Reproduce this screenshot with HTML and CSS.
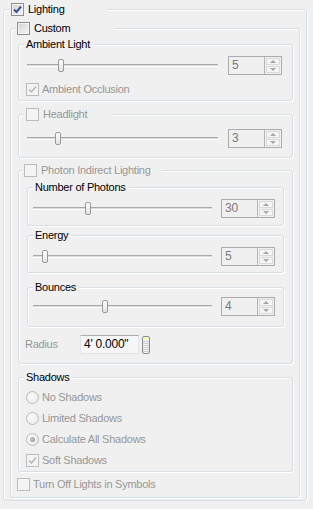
FILE: index.html
```html
<!DOCTYPE html>
<html lang="en">
<head>
    <meta charset="UTF-8">
    <meta name="viewport" content="width=device-width, initial-scale=1.0">
    <title>Lighting</title>
    <link rel="stylesheet" href="styles.css">
</head>
<body>
<div class="panel">
    <fieldset class="grp grp-lighting">
        <legend class="lg-check lg-lighting"><span class="cb"><svg viewBox="0 0 11 11"><path d="M2 5.5 L4.5 8 L9 2.5"/></svg></span>Lighting</legend>

        <fieldset class="grp grp-custom">
            <legend class="lg-check lg-custom"><span class="cb"></span>Custom</legend>

            <fieldset class="grp ambient">
                <legend class="lg-text">Ambient Light</legend>
                <div class="slider-row">
                    <div class="track"><span class="thumb" style="left:31px"></span></div>
                    <div class="spin"><span class="spin-val">5</span><span class="spin-btns"><span class="up"></span><span class="down"></span></span></div>
                </div>
                <div class="opt occl"><span class="cb dis"><svg viewBox="0 0 11 11"><path d="M2 5.5 L4.5 8 L9 2.5"/></svg></span>Ambient Occlusion</div>
            </fieldset>

            <fieldset class="grp headlight">
                <legend class="lg-check lg-head dis-text"><span class="cb dis"></span>Headlight</legend>
                <div class="slider-row">
                    <div class="track"><span class="thumb" style="left:28px"></span></div>
                    <div class="spin"><span class="spin-val">3</span><span class="spin-btns"><span class="up"></span><span class="down"></span></span></div>
                </div>
            </fieldset>

            <fieldset class="grp photon">
                <legend class="lg-check lg-photon dis-text"><span class="cb dis"></span>Photon Indirect Lighting</legend>

                <fieldset class="grp inner num">
                    <legend class="lg-text">Number of Photons</legend>
                    <div class="slider-row narrow">
                        <div class="track"><span class="thumb" style="left:52px"></span></div>
                        <div class="spin"><span class="spin-val">30</span><span class="spin-btns"><span class="up"></span><span class="down"></span></span></div>
                    </div>
                </fieldset>

                <fieldset class="grp inner energy">
                    <legend class="lg-text">Energy</legend>
                    <div class="slider-row narrow">
                        <div class="track"><span class="thumb" style="left:9px"></span></div>
                        <div class="spin"><span class="spin-val">5</span><span class="spin-btns"><span class="up"></span><span class="down"></span></span></div>
                    </div>
                </fieldset>

                <fieldset class="grp inner bounce">
                    <legend class="lg-text">Bounces</legend>
                    <div class="slider-row narrow">
                        <div class="track"><span class="thumb" style="left:69px"></span></div>
                        <div class="spin"><span class="spin-val">4</span><span class="spin-btns"><span class="up"></span><span class="down"></span></span></div>
                    </div>
                </fieldset>

                <div class="radius">
                    <span class="radius-label">Radius</span>
                    <span class="radius-input">4' 0.000"</span>
                    <svg class="calc" viewBox="0 0 8 18">
                        <rect x="0.5" y="0.5" width="7" height="17" rx="1.5" fill="#f4f4f4" stroke="#8c8c8c"/>
                        <rect x="1.5" y="1.5" width="5" height="2" fill="#f6f1a8"/>
                        <g fill="#a4a4a4">
                            <rect x="1.5" y="5" width="1" height="1"/><rect x="3.5" y="5" width="1" height="1"/><rect x="5.5" y="5" width="1" height="1"/>
                            <rect x="1.5" y="7" width="1" height="1"/><rect x="3.5" y="7" width="1" height="1"/><rect x="5.5" y="7" width="1" height="1"/>
                            <rect x="1.5" y="9" width="1" height="1"/><rect x="3.5" y="9" width="1" height="1"/><rect x="5.5" y="9" width="1" height="1"/>
                            <rect x="1.5" y="11" width="1" height="1"/><rect x="3.5" y="11" width="1" height="1"/><rect x="5.5" y="11" width="1" height="1"/>
                            <rect x="1.5" y="13" width="1" height="1"/><rect x="3.5" y="13" width="1" height="1"/><rect x="5.5" y="13" width="1" height="1"/>
                            <rect x="1.5" y="15" width="1" height="1"/><rect x="3.5" y="15" width="1" height="1"/><rect x="5.5" y="15" width="1" height="1"/>
                        </g>
                    </svg>
                </div>
            </fieldset>

            <fieldset class="grp shadows">
                <legend class="lg-text lg-shadows">Shadows</legend>
                <div class="opt"><span class="rb"></span>No Shadows</div>
                <div class="opt"><span class="rb"></span>Limited Shadows</div>
                <div class="opt"><span class="rb on"></span>Calculate All Shadows</div>
                <div class="opt soft"><span class="cb dis"><svg viewBox="0 0 11 11"><path d="M2 5.5 L4.5 8 L9 2.5"/></svg></span>Soft Shadows</div>
            </fieldset>

            <div class="opt turnoff"><span class="cb dis"></span>Turn Off Lights in Symbols</div>
        </fieldset>
    </fieldset>
</div>
</body>
</html>
```

FILE: styles.css
```css
*{
    box-sizing: border-box;
}
body{
    margin: 0;
    background: #f0f0f0;
    font: 11px/13px "Liberation Sans", Arial, sans-serif;
    letter-spacing: -0.25px;
    color: #000;
    overflow: hidden;
}
.panel{
    padding: 3px 6px 0 3px;
}

/* group boxes */
.grp{
    margin: 0;
    min-width: 0;
    border: 1px solid #d5dfe5;
    border-radius: 3px;
    box-shadow: 1px 1px 0 #fff, inset 1px 1px 0 #fff;
}
legend{
    margin: 0;
    padding: 0;
    height: 13px;
    line-height: 13px;
    background: #f0f0f0;
}
.lg-check{
    display: flex;
    align-items: center;
    padding-left: 1px;
}
.lg-text{
    padding: 0 3px 0 2px;
}
.dis-text{
    color: #979797;
}

.grp-lighting{
    padding: 6px 6px 2px 6px;
}
.lg-lighting{
    width: 98px;
}
.grp-custom{
    padding: 3px 6px 6px 7px;
}
.lg-custom{
    width: 99px;
    margin-left: -2px;
}
.ambient{
    padding: 5px 10px 4px 8px;
}
.ambient legend{
    margin-left: -3px;
}
.headlight{
    margin-top: 7px;
    padding: 8px 10px 9px 8px;
}
.lg-head{
    width: 87px;
    margin-left: -2px;
}
.photon{
    margin-top: 6px;
    padding: 4px 8px 9px 6px;
}
.lg-photon{
    width: 140px;
    margin-left: -2px;
}
.inner{
    margin-left: 2px;
    padding: 5px 8px 7px 5px;
}
.energy{
    margin-top: 3px;
    padding-bottom: 6px;
}
.bounce{
    margin-top: 8px;
    padding-top: 3px;
    padding-bottom: 10px;
}
.shadows{
    margin-top: 7px;
    padding: 7px 10px 4px 7px;
}
.lg-shadows{
    margin-left: -2px;
    padding: 0 2px;
}

/* check boxes and radios */
.cb{
    width: 13px;
    height: 13px;
    flex: none;
    margin-right: 4px;
    border: 1px solid #8f8f8f;
    background: linear-gradient(135deg, #cfd2d5, #f7f7f7);
    box-shadow: inset 0 0 0 1px #f4f4f4;
    display: flex;
    align-items: center;
    justify-content: center;
}
.cb svg{
    width: 11px;
    height: 11px;
    fill: none;
    stroke: #3d5391;
    stroke-width: 2;
}
.cb.dis{
    border-color: #bcbcbc;
    background: #f4f4f4;
    box-shadow: none;
}
.cb.dis svg{
    stroke: #b4b4b4;
    stroke-width: 1.4;
}
.rb{
    width: 13px;
    height: 13px;
    flex: none;
    margin-right: 3px;
    border: 1px solid #bcbcbc;
    border-radius: 50%;
    background: radial-gradient(circle at 40% 40%, #fbfbfb, #e6e6e6);
    display: flex;
    align-items: center;
    justify-content: center;
}
.rb.on::before{
    content: "";
    width: 5px;
    height: 5px;
    border-radius: 50%;
    background: radial-gradient(circle at 40% 40%, #c8c8c8, #8e8e8e);
}
.opt{
    display: flex;
    align-items: center;
    height: 13px;
    color: #979797;
}
.opt .cb{
    margin-right: 3px;
}
.occl{
    margin-top: 8px;
    margin-left: -1px;
}
.shadows .opt + .opt{
    margin-top: 8px;
}
.shadows .soft{
    margin-top: 7px;
}
.turnoff{
    margin-top: 6px;
    margin-left: -1px;
}

/* sliders */
.slider-row{
    display: flex;
    align-items: center;
    gap: 10px;
    height: 19px;
}
.slider-row.narrow{
    gap: 9px;
}
.track{
    flex: 1;
    position: relative;
    height: 3px;
    border-top: 1px solid #a9a9a9;
    border-bottom: 1px solid #fff;
    background: #dcdcdc;
}
.thumb{
    position: absolute;
    top: -6px;
    width: 6px;
    height: 13px;
    border: 1px solid #999;
    border-radius: 2px;
    background: linear-gradient(#fdfdfd, #e4e4e4);
}

/* spin boxes */
.spin{
    width: 54px;
    height: 19px;
    flex: none;
    display: flex;
    border: 1px solid #acacac;
}
.spin-val{
    flex: 1;
    padding-left: 3px;
    line-height: 17px;
    font-size: 12px;
    color: #7b7b7b;
}
.spin-btns{
    width: 17px;
    display: flex;
    flex-direction: column;
    gap: 1px;
    padding: 1px;
    border-left: 1px solid #b4b4b4;
}
.spin-btns span{
    flex: 1;
    border: 1px solid #dadada;
    background: #f4f4f4;
    display: flex;
    align-items: center;
    justify-content: center;
}
.spin-btns .up::before,
.spin-btns .down::before{
    content: "";
    border-left: 3px solid transparent;
    border-right: 3px solid transparent;
}
.spin-btns .up::before{
    border-bottom: 3px solid #a6a6a6;
}
.spin-btns .down::before{
    border-top: 3px solid #a6a6a6;
}

/* radius */
.radius{
    display: flex;
    align-items: center;
    height: 19px;
    margin-top: 8px;
}
.radius-label{
    width: 55px;
    color: #979797;
}
.radius-input{
    width: 59px;
    height: 19px;
    padding-left: 3px;
    line-height: 17px;
    font-size: 12px;
    border: 1px solid #e0e4ea;
    border-top-color: #abadb3;
    background: #f6f6f6;
}
.calc{
    width: 8px;
    height: 18px;
    margin-left: 3px;
}
```
